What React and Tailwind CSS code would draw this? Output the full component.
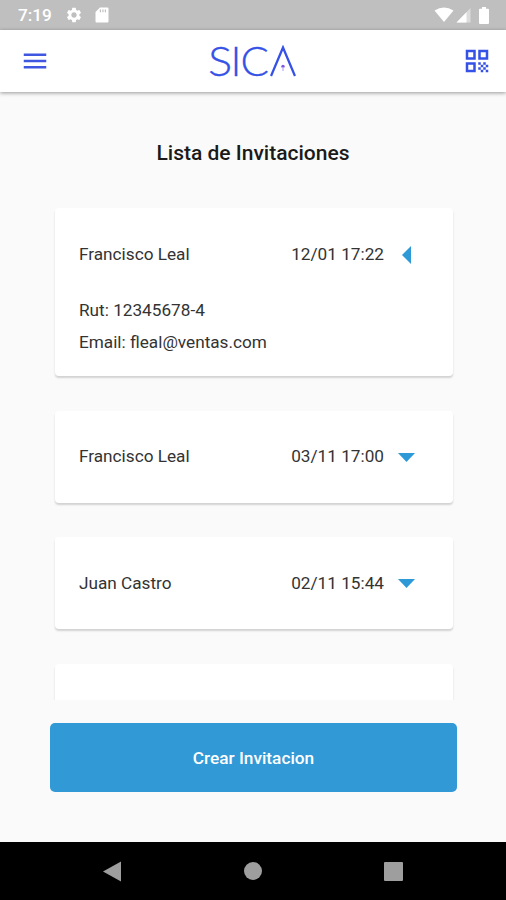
import React, { useState } from 'react';
import { MdSettings, MdMenu, MdQrCode } from 'react-icons/md';

const initialInvitations = [
    { id: 1, name: 'Francisco Leal', date: '12/01 17:22', rut: '12345678-4', email: 'fleal@ventas.com' },
    { id: 2, name: 'Francisco Leal', date: '03/11 17:00' },
    { id: 3, name: 'Juan Castro', date: '02/11 15:44' },
    { id: 4, name: '', date: '' },
];

const StatusBar = () => (
    <div className="h-[30px] shrink-0 bg-[#bfbfbf] text-white flex items-center justify-between pl-[18px] pr-[17px]">
        <div className="flex items-center">
            <span className="w-[47px] text-[17.200px] leading-none font-medium pt-[2px]">7:19</span>
            <MdSettings className="w-[18px] h-[18px]" />
            <svg className="ml-[12px]" width="14" height="16" viewBox="0 0 14 16" fill="currentColor">
                <path fillRule="evenodd" d="M5 .5h7.5Q13.500 .5 13.500 1.500V14.500Q13.500 15.500 12.500 15.500H1.500Q.5 15.500 .5 14.500V5ZM4.800 2.500V5.200H6V2.500ZM7.300 2.500V5.200H8.500V2.500ZM9.800 2.500V5.200H11V2.500Z" />
            </svg>
        </div>
        <div className="flex items-center">
            <svg width="20" height="16" viewBox="0 0 20 16" fill="currentColor">
                <path d="M.5 3.500Q10-2.500 19.500 3.500L10 15Z" />
            </svg>
            <svg className="ml-[2px]" width="15" height="16" viewBox="0 0 15 16" fill="currentColor">
                <path d="M14.500 1V15.500H.5Z" opacity=".45" />
                <path d="M10.500 5.200V15.500H.5Z" />
            </svg>
            <svg className="ml-[8px]" width="10" height="17" viewBox="0 0 10 17" fill="currentColor">
                <path d="M3 0H7V1.800H9Q10 1.800 10 2.800V16Q10 17 9 17H1Q0 17 0 16V2.800Q0 1.800 1 1.800H3Z" />
            </svg>
        </div>
    </div>
);

const Logo = () => (
    <div className="mr-[9px] mb-[2px] flex items-center text-[42px] leading-[60px] text-[#3551e6] font-['Lato',sans-serif] font-light [-webkit-text-stroke:0.3px_#3551e6]">
        <span className="w-[24px] origin-left scale-x-[1.080]">S</span>
        <span className="w-[10px] -ml-px pl-px -indent-[1px]">I</span>
        <span className="w-[29px]">C</span>
        <svg className="mt-[2px]" width="26" height="32" viewBox="0 0 26 32">
            <path d="M1 31L13 2.500L25 31" fill="none" stroke="#3551e6" strokeWidth="2.300" />
            <circle cx="13" cy="21.500" r="1.700" fill="#7a55e0" />
            <path d="M13 22V26" stroke="#c9bdf7" strokeWidth="1.500" />
        </svg>
    </div>
);

const Header = () => (
    <header className="relative z-10 h-[62px] shrink-0 bg-white shadow-[0_1px_4px_rgba(0,0,0,0.4)] flex items-center justify-between pl-[20px] pr-[14px]">
        <MdMenu className="w-[30px] h-[30px] text-[#3f57e0]" />
        <Logo />
        <MdQrCode className="w-[30px] h-[30px] text-[#3551e6]" />
    </header>
);

const InvitationCard = ({ invitation, open, onToggle }) => (
    <div className="shrink-0 bg-white rounded-[4px] shadow-[0_2px_2px_rgba(0,0,0,0.16)] px-[24px] text-[17.200px] text-[#333333]">
        <button onClick={onToggle} className="w-full h-[92px] pt-px flex items-center text-left">
            <span className="flex-1">{invitation.name}</span>
            <span className="whitespace-nowrap">{invitation.date}</span>
            <span className="w-[17px] ml-[14px] mr-[14px] flex justify-center">
                {open ? (
                    <svg className="mr-px" width="9" height="18" viewBox="0 0 9 18" fill="#2d9ad7"><path d="M9 0V18L0 9Z" /></svg>
                ) : (
                    <svg width="17" height="9" viewBox="0 0 17 9" fill="#2d9ad7"><path d="M0 0H17L8.500 9Z" /></svg>
                )}
            </span>
        </button>
        {open && (
            <div className="-mt-[6px] h-[82px] leading-[32px]">
                <div>Rut: {invitation.rut}</div>
                <div>Email: {invitation.email}</div>
            </div>
        )}
    </div>
);

const App = () => {
    const [openId, setOpenId] = useState(1);

    return (
        <div className="h-[900px] w-[506px] flex flex-col overflow-hidden bg-[#fafafa] font-['Roboto',sans-serif]">
            <StatusBar />
            <Header />
            <h1 className="mt-[46px] h-[30px] leading-[30px] text-center text-[21px] font-medium text-[#1a1a1a]">Lista de Invitaciones</h1>
            <div className="mt-[32px] h-[500px] shrink-0 overflow-hidden pl-[55px] pr-[53px] pt-[8px] flex flex-col gap-[34.700px]">
                {initialInvitations.map((invitation) => (
                    <InvitationCard
                        key={invitation.id}
                        invitation={invitation}
                        open={openId === invitation.id}
                        onToggle={() => setOpenId(openId === invitation.id ? null : invitation.id)}
                    />
                ))}
            </div>
            <button className="mt-[23px] mx-[50px] h-[69px] w-[407px] pt-[2px] shrink-0 rounded-[5px] bg-[#3099d6] text-white text-[17.250px] font-medium">
                Crear Invitacion
            </button>
            <nav className="mt-auto h-[58px] shrink-0 bg-black flex items-center justify-between pl-[103px] pr-[103px]">
                <svg width="18" height="21" viewBox="0 0 18 21" fill="#9e9e9e"><path d="M18 .5V20.500L0 10.500Z" /></svg>
                <span className="w-[18px] h-[18px] rounded-full bg-[#9e9e9e]" />
                <span className="w-[19px] h-[19px] rounded-[1px] bg-[#9e9e9e]" />
            </nav>
        </div>
    );
};

export default App;
